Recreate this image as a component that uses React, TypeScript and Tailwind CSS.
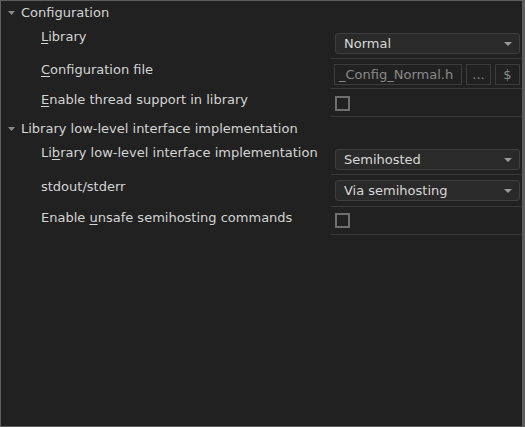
import React from "react";

const font = { fontFamily: '"DejaVu Sans", Verdana, sans-serif' };

function Header({ text }: { text: string }) {
  return (
    <div className="flex h-[24px] items-center">
      <div className="flex w-[20px] justify-end pr-[6px]">
        <svg width="7" height="4" viewBox="0 0 7 4">
          <polygon points="0,0 7,0 3.5,4" fill="#8a8a8a" />
        </svg>
      </div>
      <span className="text-[13px] text-[#d4d4d4]">{text}</span>
    </div>
  );
}

function U({ children }: { children: React.ReactNode }) {
  return <span className="underline underline-offset-[2px] decoration-1">{children}</span>;
}

function Arrow() {
  return (
    <svg width="8" height="4" viewBox="0 0 8 4" className="shrink-0">
      <polygon points="0,0 8,0 4,4" fill="#9a9a9a" />
    </svg>
  );
}

function Select({ value }: { value: string }) {
  return (
    <div className="flex h-[21px] w-[185px] items-center justify-between rounded-[3px] border border-[#3e3e3e] bg-[#2a2a2a] pl-[8px] pr-[7px]">
      <span className="text-[13px] text-[#d8d8d8]">{value}</span>
      <Arrow />
    </div>
  );
}

function Check() {
  return <div className="h-[15px] w-[15px] border-[2px] border-[#6f6f6f]" />;
}

function Row({
  label,
  control,
  h,
  ctop,
  ltop,
}: {
  label: React.ReactNode;
  control: React.ReactNode;
  h: number;
  ctop: string;
  ltop: string;
}) {
  return (
    <div className="flex" style={{ height: h }}>
      <div className={`w-[330px] whitespace-nowrap pl-[40px] text-[13px] text-[#d4d4d4] ${ltop}`}>{label}</div>
      <div className={`flex-1 border-b border-[#3a3a3a] pl-[4px] ${ctop}`}>{control}</div>
    </div>
  );
}

export default function App() {
  return (
    <div
      className="flex h-[427px] w-[525px] flex-col overflow-hidden border border-[#5e5e5e] border-r-[3px] bg-[#212121]"
      style={font}
    >
      <Header text="Configuration" />
      <Row
        h={34}
        ltop="pt-[2px]"
        ctop="pt-[8px]"
        label={
          <span>
            <U>L</U>ibrary
          </span>
        }
        control={<Select value="Normal" />}
      />
      <Row
        h={30}
        ltop="pt-[1px]"
        ctop="pt-[5px]"
        label={
          <span>
            <U>C</U>onfiguration file
          </span>
        }
        control={
          <div className="-ml-[1px] flex items-center gap-[4px]">
            <div className="flex h-[21px] w-[128px] items-center overflow-hidden border border-[#3c3c3c] pl-[4px]">
              <span className="whitespace-nowrap text-[13px] text-[#8a8a8a]">_Config_Normal.h</span>
            </div>
            <div className="flex h-[21px] w-[25px] items-center justify-center border border-[#3c3c3c] text-[13px] text-[#8a8a8a]">
              ...
            </div>
            <div className="flex h-[21px] w-[25px] items-center justify-center border border-[#3c3c3c] text-[13px] text-[#8a8a8a]">
              $
            </div>
          </div>
        }
      />
      <Row
        h={28}
        ltop="pt-[1px]"
        ctop="pt-[7px]"
        label={
          <span>
            <U>E</U>nable thread support in library
          </span>
        }
        control={<Check />}
      />
      <Header text="Library low-level interface implementation" />
      <Row
        h={34}
        ltop="pt-[2px]"
        ctop="pt-[8px]"
        label={
          <span>
            Li<U>b</U>rary low-level interface implementation
          </span>
        }
        control={<Select value="Semihosted" />}
      />
      <Row
        h={32}
        ltop="pt-[2px]"
        ctop="pt-[5px]"
        label={<span>stdout/stderr</span>}
        control={<Select value="Via semihosting" />}
      />
      <Row
        h={28}
        ltop="pt-[1px]"
        ctop="pt-[6px]"
        label={
          <span>
            Enable <U>u</U>nsafe semihosting commands
          </span>
        }
        control={<Check />}
      />
    </div>
  );
}
